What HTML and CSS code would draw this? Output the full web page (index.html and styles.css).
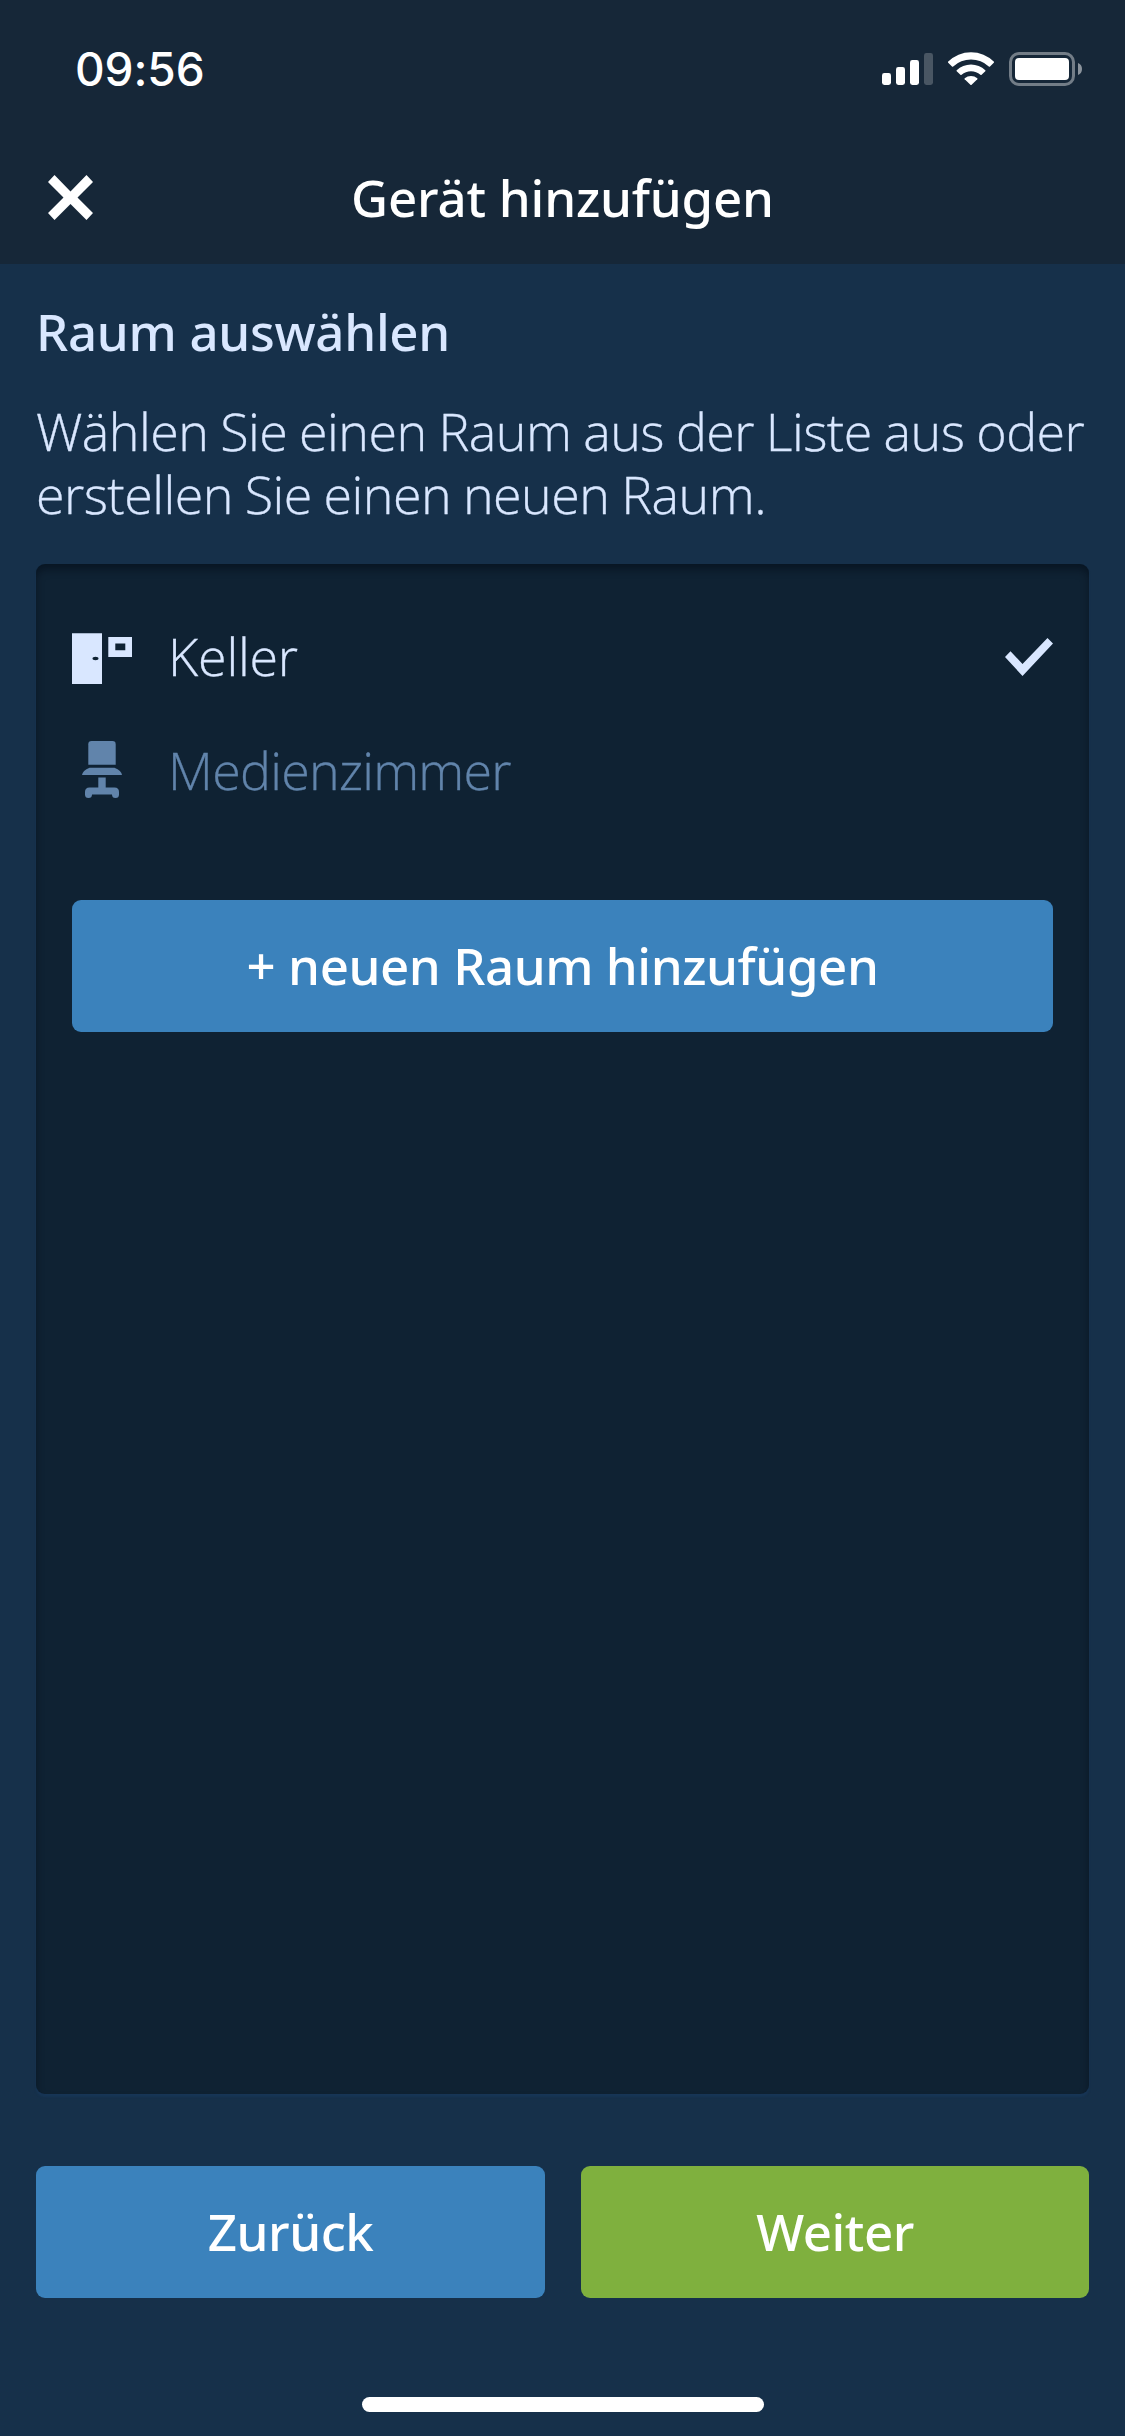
FILE: index.html
```
<!DOCTYPE html>
<html lang="de">
<head>
<meta charset="utf-8">
<title>Gerät hinzufügen</title>
<link rel="stylesheet" href="styles.css">
</head>
<body>
<div class="screen">
  <header class="header">
    <div class="status">
      <span class="time">09:56</span>
      <svg class="status-icons" width="200" height="34" viewBox="0 0 200 34" fill="#fff">
        <rect x="0" y="21" width="9" height="12" rx="2.4"/>
        <rect x="14" y="15" width="9" height="18" rx="2.4"/>
        <rect x="28" y="8" width="9" height="25" rx="2.4"/>
        <rect x="42" y="1" width="9" height="32" rx="2.4" opacity=".22"/>
        <path d="M66 9.7A32.5 32.5 0 0 1 112 9.7Q112.3 10.2 111.8 10.8L108 14.5Q107.4 15 106.800 14.500A26 26 0 0 0 71.200 14.500Q70.600 15 70 14.500L66.200 10.800Q65.700 10.200 66 9.700Z"/>
        <path d="M74.700 18.200A20.500 20.500 0 0 1 103.300 18.200Q103.800 18.700 103.300 19.300L99.600 22.800Q99 23.300 98.400 22.800A14 14 0 0 0 79.600 22.800Q79 23.300 78.400 22.800L74.700 19.300Q74.200 18.700 74.700 18.200Z"/>
        <path d="M82.700 26.300A9.500 9.500 0 0 1 95.300 26.300Q95.700 26.800 95.300 27.300L89.600 32.800Q89 33.300 88.400 32.800L82.700 27.300Q82.300 26.800 82.700 26.300Z"/>
        <rect x="128.500" y="1.500" width="63" height="31" rx="8.500" fill="none" stroke="#fff" stroke-width="3" opacity=".4"/>
        <rect x="133" y="6" width="54" height="22" rx="4"/>
        <path d="M196 11Q200 12.500 200 17T196 23Z" opacity=".5"/>
      </svg>
    </div>
    <div class="nav">
      <svg class="close" width="45" height="45" viewBox="0 0 45 45"><path d="M6.500 0L22.500 16.500L38.500 0L45 7L29.500 22.500L45 38L38.500 45L22.500 29L6.500 45L0 38L15.500 22.500L0 7Z" fill="#fff"/></svg>
      <h1 class="title">Gerät hinzufügen</h1>
    </div>
  </header>
  <main class="content">
    <h2 class="heading">Raum auswählen</h2>
    <p class="intro">Wählen Sie einen Raum aus der Liste aus oder<br>erstellen Sie einen neuen Raum.</p>
    <section class="panel">
      <div class="room room-selected">
        <svg class="room-icon" width="60" height="60" viewBox="0 0 60 60" fill="currentColor">
          <path fill-rule="evenodd" d="M0 8.300H30V59H0ZM20.500 33.500A3 1.700 0 0 0 26.500 33.500A3 1.700 0 0 0 20.500 33.500Z"/>
          <path fill-rule="evenodd" d="M36.300 12H60V32H36.300ZM43.300 18.500V25.300H53.300V18.500Z"/>
        </svg>
        <span class="room-name">Keller</span>
        <svg class="check" width="48" height="38" viewBox="0 0 48 38"><path d="M0 19L5.500 13.300L17.500 26L42.500 0L48 5.500L17.500 38Z" fill="currentColor"/></svg>
      </div>
      <div class="room">
        <svg class="room-icon" width="60" height="60" viewBox="0 0 60 60" fill="currentColor">
          <path d="M19.500 2H40.500Q43.700 2 43.700 5.200V25.700H16.300V5.200Q16.300 2 19.500 2Z"/>
          <path d="M10 36Q10.500 31.500 17.500 28.700H42.500Q49.500 31.500 50 36Z"/>
          <path d="M26.300 38.500H33.700V48.500H42.500Q47 48.500 47 53V55.500A3.400 3.400 0 0 1 40 55.500H20A3.400 3.400 0 0 1 13 55.500V53Q13 48.500 17.500 48.500H26.300Z"/>
        </svg>
        <span class="room-name room-name-long">Medienzimmer</span>
      </div>
      <button class="button add">+ neuen Raum hinzufügen</button>
    </section>
    <footer class="actions">
      <button class="button">Zurück</button>
      <button class="button next">Weiter</button>
    </footer>
  </main>
  <div class="home-indicator"></div>
</div>
</body>
</html>
```
FILE: styles.css
```
* {
  box-sizing: border-box;
}

body {
  margin: 0;
  background: #16304a;
  font-family: "Noto Sans", sans-serif;
  font-size: 52px;
  color: #fff;
}

.screen {
  display: flex;
  flex-direction: column;
  width: 1125px;
  height: 2436px;
  padding-bottom: 24px;
}

.header {
  height: 264px;
  background: #162738;
}

.status {
  display: flex;
  align-items: center;
  justify-content: space-between;
  height: 138px;
  padding: 0 43px 0 75px;
}

.time {
  font: 500 46px/60px Inter, sans-serif;
  letter-spacing: -0.1px;
}

.nav {
  display: grid;
  grid-template-columns: 48px 1fr 48px;
  align-items: center;
  height: 126px;
  padding: 0 0 8px;
}

.close {
  justify-self: start;
  margin: 1px 0 0 48px;
}

.title {
  margin: 0;
  font-size: 51px;
  font-weight: 500;
  line-height: 60px;
  letter-spacing: -0.2px;
  text-align: center;
}

.content {
  display: flex;
  flex: 1;
  flex-direction: column;
  padding: 37px 36px 0;
}

.heading {
  margin: 0 0 38px;
  font-size: 51px;
  font-weight: 500;
  line-height: 60px;
  letter-spacing: -0.3px;
  color: #d9e7ff;
}

.intro {
  margin: 0 0 39px;
  font-family: "Open Sans", sans-serif;
  font-weight: 300;
  line-height: 63px;
  letter-spacing: -0.55px;
  word-spacing: -1.1px;
  white-space: nowrap;
  color: #d9e7ff;
  -webkit-text-stroke: 0.3px currentColor;
}

.panel {
  display: flex;
  flex-direction: column;
  height: 1530px;
  padding: 34px 36px 0;
  border-radius: 9px;
  background: #0f2233;
  box-shadow: inset 0 6px 9px -1px rgba(0, 8, 18, 0.5), 0 3px 2px #173555;
}

.room {
  display: flex;
  align-items: center;
  height: 114px;
  color: #6184ab;
}

.room-selected {
  color: #d9e7ff;
}

.room-icon {
  margin-right: 36px;
}

.room-name {
  flex: 1;
  font-family: "Open Sans", sans-serif;
  font-weight: 300;
  line-height: 63px;
  letter-spacing: -0.2px;
  -webkit-text-stroke: 0.3px currentColor;
}

.room-name-long {
  letter-spacing: -0.75px;
}

.check {
  margin-top: 4px;
}

.button {
  height: 132px;
  padding: 0 0 3px;
  border: 0;
  border-radius: 9px;
  background: #3b82bc;
  color: #fff;
  font: 500 51px/60px "Noto Sans", sans-serif;
  letter-spacing: -0.45px;
}

.add {
  margin-top: 74px;
}

.actions {
  display: grid;
  grid-template-columns: 509px 508px;
  gap: 36px;
  margin-top: 72px;
}

.next {
  background: #7fb03e;
}

.home-indicator {
  width: 402px;
  height: 15px;
  margin: 0 auto;
  border-radius: 8px;
  background: #fff;
}
```
